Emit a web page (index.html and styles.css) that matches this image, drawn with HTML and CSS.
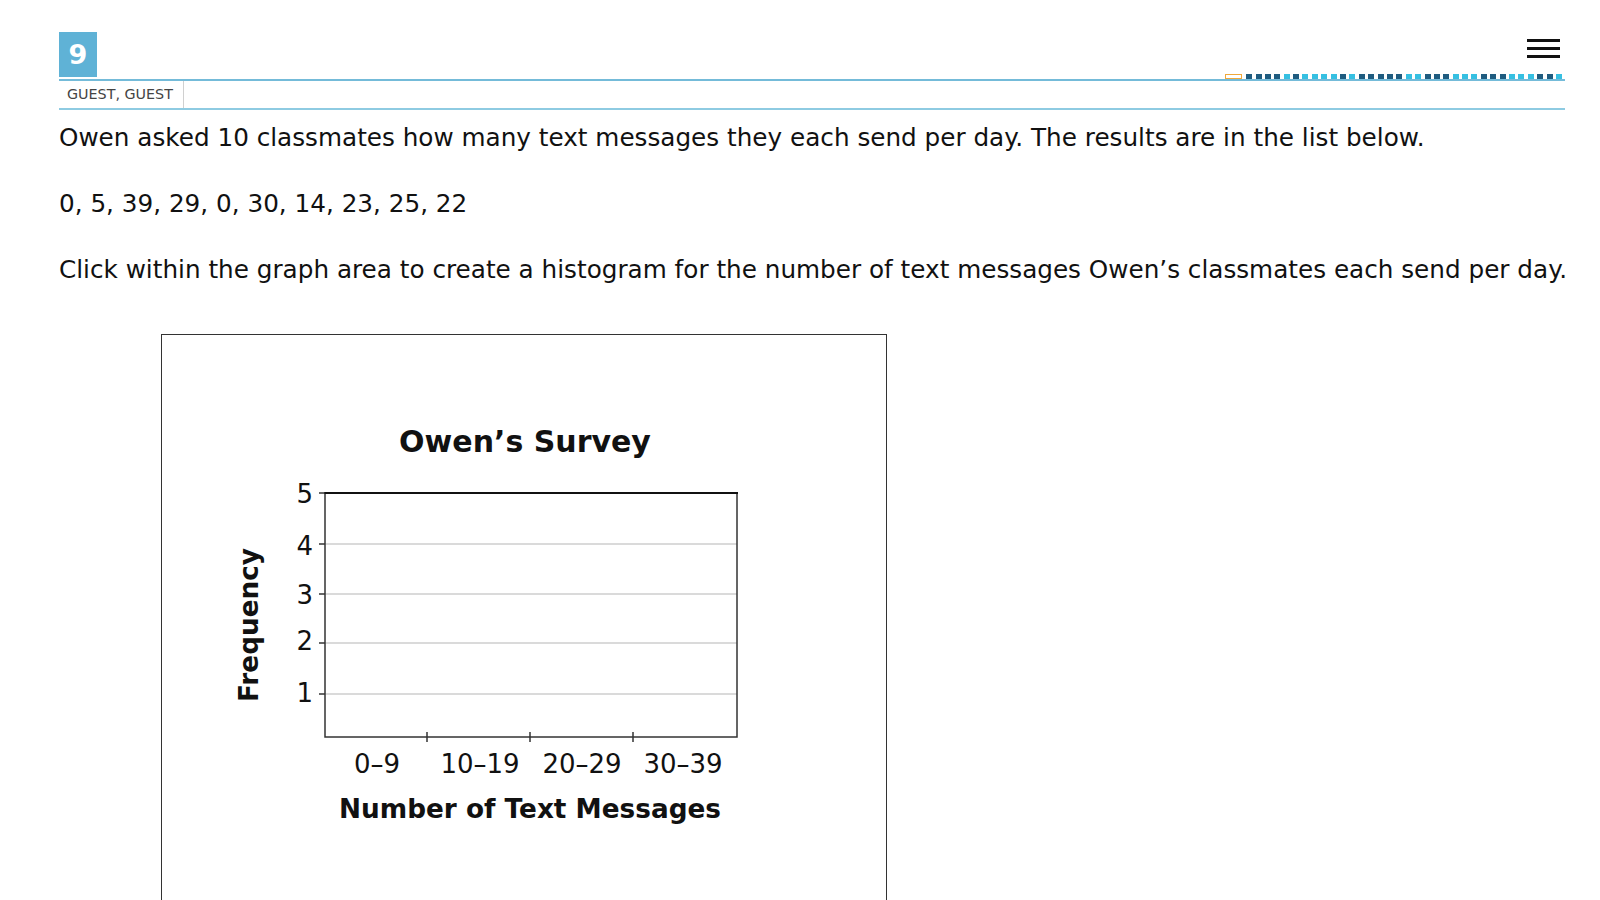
FILE: index.html
```html
<!DOCTYPE html>
<html lang="en">
<head>
    <meta charset="UTF-8">
    <title>Question 9</title>
    <link rel="stylesheet" href="styles.css">
</head>
<body>
<div class="page">

    <header class="topbar">
        <div class="qnum">9</div>
        <div class="topbar-right">
            <div class="menu-btn">
                <span></span><span></span><span></span>
            </div>
            <div class="progress">
                <span class="current"></span>
                <span class="dot dark"></span><span class="dot dark"></span><span class="dot dark"></span><span class="dot dark"></span>
                <span class="dot light"></span><span class="dot dark"></span><span class="dot light"></span><span class="dot light"></span>
                <span class="dot light"></span><span class="dot light"></span><span class="dot dark"></span><span class="dot light"></span>
                <span class="dot dark"></span><span class="dot dark"></span><span class="dot dark"></span><span class="dot dark"></span>
                <span class="dot dark"></span><span class="dot light"></span><span class="dot light"></span><span class="dot dark"></span>
                <span class="dot dark"></span><span class="dot dark"></span><span class="dot light"></span><span class="dot light"></span>
                <span class="dot light"></span><span class="dot dark"></span><span class="dot dark"></span><span class="dot dark"></span>
                <span class="dot light"></span><span class="dot light"></span><span class="dot light"></span><span class="dot dark"></span>
                <span class="dot dark"></span><span class="dot light"></span>
            </div>
        </div>
    </header>

    <div class="userbar">
        <div class="username">GUEST, GUEST</div>
    </div>

    <div class="question">
        <p>Owen asked 10 classmates how many text messages they each send per day. The results are in the list below.</p>
        <p>0, 5, 39, 29, 0, 30, 14, 23, 25, 22</p>
        <p>Click within the graph area to create a histogram for the number of text messages Owen’s classmates each send per day.</p>
    </div>

    <div class="graph">
        <svg class="chart" width="724" height="598" viewBox="0 0 724 598">
            <text class="chart-title" x="363" y="117" text-anchor="middle">Owen’s Survey</text>

            <line class="grid" x1="163" y1="209" x2="575" y2="209"/>
            <line class="grid" x1="163" y1="259" x2="575" y2="259"/>
            <line class="grid" x1="163" y1="308" x2="575" y2="308"/>
            <line class="grid" x1="163" y1="359" x2="575" y2="359"/>

            <rect class="frame" x="163" y="158" width="412" height="244"/>
            <line class="frame-top" x1="162" y1="158" x2="576" y2="158"/>

            <line class="tick" x1="157" y1="158" x2="163" y2="158"/>
            <line class="tick" x1="157" y1="209" x2="163" y2="209"/>
            <line class="tick" x1="157" y1="259" x2="163" y2="259"/>
            <line class="tick" x1="157" y1="308" x2="163" y2="308"/>
            <line class="tick" x1="157" y1="359" x2="163" y2="359"/>

            <line class="tick" x1="265" y1="397" x2="265" y2="407"/>
            <line class="tick" x1="368" y1="397" x2="368" y2="407"/>
            <line class="tick" x1="471" y1="397" x2="471" y2="407"/>

            <text class="axis-num" x="151" y="168" text-anchor="end">5</text>
            <text class="axis-num" x="151" y="220" text-anchor="end">4</text>
            <text class="axis-num" x="151" y="269" text-anchor="end">3</text>
            <text class="axis-num" x="151" y="315" text-anchor="end">2</text>
            <text class="axis-num" x="151" y="367" text-anchor="end">1</text>

            <text class="axis-num" x="215" y="438" text-anchor="middle">0–9</text>
            <text class="axis-num" x="318" y="438" text-anchor="middle">10–19</text>
            <text class="axis-num" x="420" y="438" text-anchor="middle">20–29</text>
            <text class="axis-num" x="521" y="438" text-anchor="middle">30–39</text>

            <text class="axis-title" x="368" y="483" text-anchor="middle">Number of Text Messages</text>
            <text class="axis-title" transform="translate(96 290) rotate(-90)" text-anchor="middle">Frequency</text>
        </svg>
    </div>

</div>
</body>
</html>
```

FILE: styles.css
```css
body {
    margin: 0;
    background: #fff;
    font-family: "DejaVu Sans", Verdana, sans-serif;
    color: #111;
}
.page {
    padding: 32px 35px 0 59px;
}

/* header */
.topbar {
    display: flex;
    justify-content: space-between;
    align-items: flex-end;
    border-bottom: 2px solid #74bbd9;
}
.qnum {
    width: 38px;
    height: 45px;
    margin-bottom: 2px;
    background: #5fb2d6;
    color: #fff;
    font-weight: bold;
    font-size: 27px;
    line-height: 45px;
    text-align: center;
}
.topbar-right {
    display: flex;
    flex-direction: column;
    align-items: flex-end;
    gap: 16px;
}
.menu-btn {
    display: flex;
    flex-direction: column;
    gap: 5px;
    width: 33px;
    margin-right: 5px;
}
.menu-btn span {
    height: 3px;
    background: #111;
}
.progress {
    display: flex;
    align-items: flex-end;
    gap: 3.4px;
    margin-right: 3px;
}
.progress .current {
    width: 15px;
    height: 3px;
    border: 1px solid #f0a83a;
    background: #fff;
    margin-right: 1px;
}
.dot {
    width: 6px;
    height: 5px;
}
.dot.dark {
    background: #1f5c80;
}
.dot.light {
    background: #36c0e2;
}

.userbar {
    display: flex;
    border-bottom: 2px solid #8ecbe2;
}
.username {
    padding: 0 10px 0 8px;
    border-right: 1px solid #d0d0d0;
    font-size: 14.3px;
    line-height: 27px;
    color: #444;
}

/* question text */
.question {
    padding-top: 10px;
}
.question p {
    margin: 0 0 30px;
    font-size: 24.7px;
    line-height: 36px;
    white-space: nowrap;
}
.question p:last-child {
    margin-bottom: 0;
}

/* graph */
.graph {
    width: 724px;
    height: 598px;
    margin: 46px 0 0 102px;
    border: 1px solid #333;
}
.chart {
    display: block;
}
.chart text {
    font-family: "DejaVu Sans", Verdana, sans-serif;
    fill: #111;
}
.chart-title {
    font-size: 30px;
    font-weight: bold;
}
.axis-title {
    font-size: 26.3px;
    font-weight: bold;
}
.axis-num {
    font-size: 26px;
}
.grid {
    stroke: #b5b5b5;
    stroke-width: 1;
}
.frame {
    fill: none;
    stroke: #333;
    stroke-width: 1.5;
}
.frame-top {
    stroke: #111;
    stroke-width: 2;
}
.tick {
    stroke: #333;
    stroke-width: 1.5;
}
```
